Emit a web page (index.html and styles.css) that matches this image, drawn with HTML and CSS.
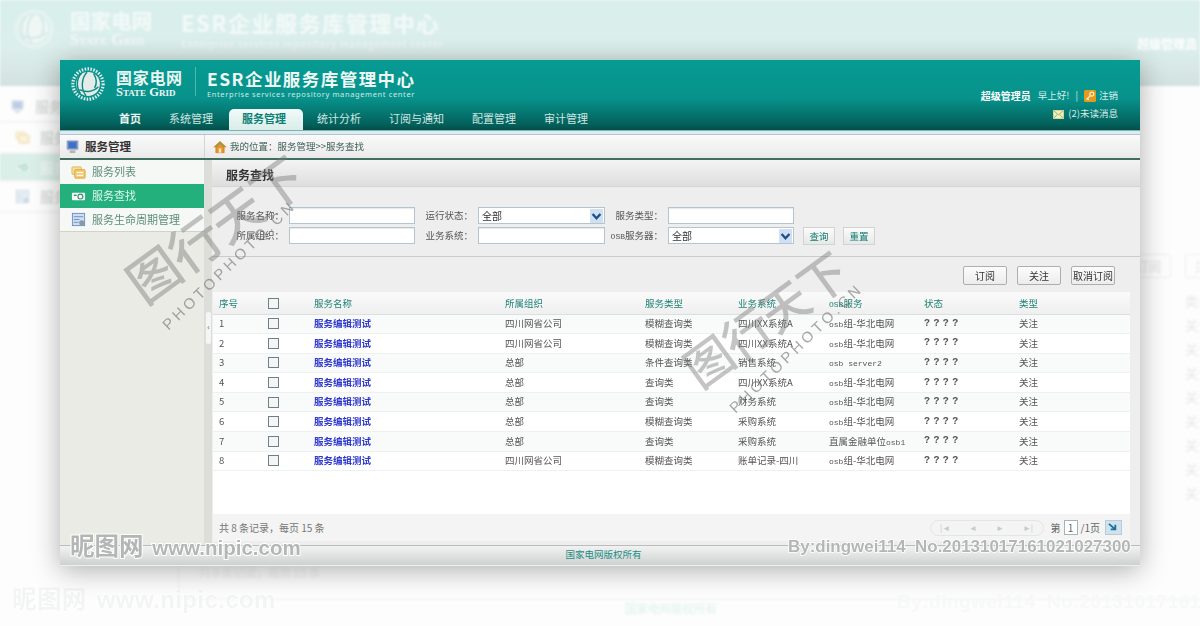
FILE: index.html
```html
<!DOCTYPE html>
<html lang="zh-CN">
<head>
<meta charset="utf-8">
<title>ESR企业服务库管理中心</title>
<link rel="stylesheet" href="styles.css">
</head>
<body>
<svg class="defs" width="0" height="0">
  <symbol id="logo" viewBox="0 0 36 36">
    <circle cx="18" cy="18" r="16" fill="none" stroke="var(--logo-fill, #e6efec)" stroke-width="3.4" stroke-dasharray="1.6 1.5"/>
    <circle cx="18" cy="18" r="12.6" fill="var(--logo-fill, #e4ebe9)"/>
    <path d="M11 7c-5 5-6 14-1 21M17 5.500c-6 6-7 18-1 25M9 24c6 3 14 3 20-3M24 7c3 5 4 10 1 15" fill="none" stroke="var(--logo-line, #0a8a80)" stroke-width="1.500"/>
  </symbol>
  <symbol id="monitor" viewBox="0 0 16 16">
    <rect x="2" y="1.500" width="12" height="10" rx="1" fill="#6f8fc4" stroke="#c3c9d6"/>
    <rect x="4" y="3.500" width="8" height="6" fill="#3f6fc9"/>
    <rect x="5" y="12" width="6" height="3" fill="#b5b5b5"/>
  </symbol>
  <symbol id="folder" viewBox="0 0 16 16">
    <rect x="1" y="2" width="10" height="8" rx="1" fill="#f6dd9a" stroke="#e0b65b"/>
    <rect x="4" y="5" width="11" height="9" rx="1" fill="#f4cd73" stroke="#d9a445"/>
    <path d="M6 8h7M6 11h7" stroke="#fff" stroke-width="1"/>
  </symbol>
  <symbol id="camera" viewBox="0 0 16 16">
    <rect x="1" y="4" width="14" height="8" rx="1" fill="#f4f8f6"/>
    <circle cx="10" cy="8" r="2.600" fill="none" stroke="#3a8e70" stroke-width="1.200"/>
    <rect x="3" y="6" width="3" height="1.500" fill="#3a8e70"/>
  </symbol>
  <symbol id="cycle" viewBox="0 0 16 16">
    <rect x="1.500" y="1.500" width="13" height="13" fill="#cfdff2" stroke="#6c8fbe"/>
    <path d="M3 5h10M3 8h6M3 11h5" stroke="#6c8fbe"/>
    <circle cx="11.500" cy="11.500" r="2.800" fill="#8a98a8"/>
  </symbol>
  <symbol id="home" viewBox="0 0 16 16">
    <path d="M8 1.500 1 8h2.200v6.500h9.600V8H15z" fill="#e98f2c" stroke="#c7701b" stroke-width=".6"/>
    <rect x="6.500" y="9.500" width="3" height="5" fill="#f7e5b8"/>
    <path d="M3.500 7.500 8 3.500l4.500 4" fill="none" stroke="#6aa84f" stroke-width="1.200"/>
  </symbol>
  <symbol id="key" viewBox="0 0 12 12">
    <rect width="12" height="12" rx="1.500" fill="#e39a1e"/>
    <circle cx="7.800" cy="4.200" r="2" fill="none" stroke="#fff3c9" stroke-width="1.200"/>
    <path d="M6.400 5.600 2.500 9.500M3.500 8.500l1.300 1.300" stroke="#fff3c9" stroke-width="1.200"/>
  </symbol>
  <symbol id="mail" viewBox="0 0 12 10">
    <rect x=".5" y=".5" width="11" height="9" fill="#f3f0b8" stroke="#d7dba0"/>
    <path d="M1 1l5 4.500L11 1M1 9l3.500-4M11 9 7.500 5" fill="none" stroke="#7fa36c" stroke-width=".9"/>
  </symbol>
  <symbol id="arrow" viewBox="0 0 10 10">
    <path d="M2 3.500 5 6.800 8 3.500" fill="none" stroke="#1f4e8c" stroke-width="1.800"/>
  </symbol>
</svg>

<div class="ghost">
  <div class="ghost-head">
    <svg class="ghost-logo"><use href="#logo"/></svg>
    <div class="ghost-brand">
      <div class="ghost-cn">国家电网</div>
      <div class="ghost-en">State Grid</div>
    </div>
    <div class="ghost-title">
      <div class="ghost-esr">ESR企业服务库管理中心</div>
      <div class="ghost-sub">Enterprise services repository management center</div>
    </div>
    <div class="ghost-user">超级管理员</div>
  </div>
  <div class="ghost-side">
    <div class="ghost-row ghost-first"><svg class="ghost-ico"><use href="#monitor"/></svg>服务</div>
    <div class="ghost-row"><svg class="ghost-ico"><use href="#folder"/></svg>服务</div>
    <div class="ghost-row ghost-on"><svg class="ghost-ico"><use href="#camera"/></svg>服务</div>
    <div class="ghost-row"><svg class="ghost-ico"><use href="#cycle"/></svg>服务</div>
  </div>
  <div class="ghost-btns"><span class="ghost-btn">订阅</span><span class="ghost-btn">关注</span></div>
  <div class="ghost-col">
    <span>类型</span><span>关注</span><span>关注</span><span>关注</span><span>关注</span><span>关注</span><span>关注</span><span>关注</span><span>关注</span>
  </div>
  <div class="ghost-foot"><span>共 8 条记录，每页 15 条</span></div>
  <div class="ghost-copy">国家电网版权所有</div>
</div>
<div class="ghost-nipic"><span class="nipic-cn">昵图网</span> www.nipic.com</div>
<div class="ghost-by">By:dingwei114&nbsp; No.20131017161021027300</div>

<main class="window">
  <header class="head">
    <div class="head-left">
      <div class="brand">
        <svg class="logo"><use href="#logo"/></svg>
        <div class="brand-name">
          <div class="brand-cn">国家电网</div>
          <div class="brand-en">State Grid</div>
        </div>
        <div class="brand-title">
          <div class="esr">ESR企业服务库管理中心</div>
          <div class="esr-sub">Enterprise services repository management center</div>
        </div>
      </div>
      <nav class="nav">
        <a class="nav-item nav-home">首页</a>
        <a class="nav-item">系统管理</a>
        <a class="nav-item nav-on">服务管理</a>
        <a class="nav-item">统计分析</a>
        <a class="nav-item">订阅与通知</a>
        <a class="nav-item">配置管理</a>
        <a class="nav-item">审计管理</a>
      </nav>
    </div>
    <div class="user">
      <div class="user-line">
        <b class="user-name">超级管理员</b><span>早上好!</span><span class="user-sep">|</span>
        <svg class="ico-12"><use href="#key"/></svg><span>注销</span>
      </div>
      <div class="user-line user-msg">
        <svg class="ico-mail"><use href="#mail"/></svg><span>(2)未读消息</span>
      </div>
    </div>
  </header>
  <div class="strip"></div>

  <div class="crumb-row">
    <div class="side-head"><svg class="ico-16"><use href="#monitor"/></svg><b>服务管理</b></div>
    <div class="crumb"><svg class="ico-14"><use href="#home"/></svg><span>我的位置：服务管理&gt;&gt;服务查找</span></div>
  </div>

  <div class="body-row">
    <aside class="side">
      <a class="side-item"><svg class="ico-16"><use href="#folder"/></svg>服务列表</a>
      <a class="side-item side-on"><svg class="ico-16"><use href="#camera"/></svg>服务查找</a>
      <a class="side-item side-last"><svg class="ico-16"><use href="#cycle"/></svg>服务生命周期管理</a>
    </aside>
    <div class="split"><span class="split-handle">‹</span></div>
    <section class="content">
      <h1 class="panel-title">服务查找</h1>
      <form class="filters">
        <label class="f-label">服务名称：</label><input class="f-input" type="text">
        <label class="f-label">运行状态：</label><div class="f-select"><span>全部</span><svg class="f-arrow"><use href="#arrow"/></svg></div>
        <label class="f-label">服务类型：</label><input class="f-input" type="text"><span></span>
        <label class="f-label">所属组织：</label><input class="f-input" type="text">
        <label class="f-label">业务系统：</label><input class="f-input" type="text">
        <label class="f-label"><span class="mono">OSB</span>服务器：</label><div class="f-select"><span>全部</span><svg class="f-arrow"><use href="#arrow"/></svg></div>
        <div class="f-btns"><span class="mini-btn">查询</span><span class="mini-btn">重置</span></div>
      </form>
      <div class="toolbar">
        <span class="tool-btn">订阅</span><span class="tool-btn">关注</span><span class="tool-btn">取消订阅</span>
      </div>
      <div class="grid-wrap">
        <table class="grid">
          <colgroup>
            <col class="c1"><col class="c2"><col class="c3"><col class="c4"><col class="c5"><col class="c6"><col class="c7"><col class="c8"><col class="c9">
          </colgroup>
          <thead>
            <tr><th>序号</th><th><span class="cb"></span></th><th>服务名称</th><th>所属组织</th><th>服务类型</th><th>业务系统</th><th><span class="mono">OSB</span>服务</th><th>状态</th><th>类型</th></tr>
          </thead>
          <tbody>
            <tr><td>1</td><td><span class="cb"></span></td><td class="link">服务编辑测试</td><td>四川网省公司</td><td>模糊查询类</td><td>四川XX系统A</td><td><span class="mono">osb</span>组-华北电网</td><td class="q">????</td><td>关注</td></tr>
            <tr><td>2</td><td><span class="cb"></span></td><td class="link">服务编辑测试</td><td>四川网省公司</td><td>模糊查询类</td><td>四川XX系统A</td><td><span class="mono">osb</span>组-华北电网</td><td class="q">????</td><td>关注</td></tr>
            <tr><td>3</td><td><span class="cb"></span></td><td class="link">服务编辑测试</td><td>总部</td><td>条件查询类</td><td>销售系统</td><td><span class="mono">osb server2</span></td><td class="q">????</td><td>关注</td></tr>
            <tr><td>4</td><td><span class="cb"></span></td><td class="link">服务编辑测试</td><td>总部</td><td>查询类</td><td>四川XX系统A</td><td><span class="mono">osb</span>组-华北电网</td><td class="q">????</td><td>关注</td></tr>
            <tr><td>5</td><td><span class="cb"></span></td><td class="link">服务编辑测试</td><td>总部</td><td>查询类</td><td>财务系统</td><td><span class="mono">osb</span>组-华北电网</td><td class="q">????</td><td>关注</td></tr>
            <tr><td>6</td><td><span class="cb"></span></td><td class="link">服务编辑测试</td><td>总部</td><td>模糊查询类</td><td>采购系统</td><td><span class="mono">osb</span>组-华北电网</td><td class="q">????</td><td>关注</td></tr>
            <tr><td>7</td><td><span class="cb"></span></td><td class="link">服务编辑测试</td><td>总部</td><td>查询类</td><td>采购系统</td><td>直属金融单位<span class="mono">osb1</span></td><td class="q">????</td><td>关注</td></tr>
            <tr><td>8</td><td><span class="cb"></span></td><td class="link">服务编辑测试</td><td>四川网省公司</td><td>模糊查询类</td><td>账单记录-四川</td><td><span class="mono">osb</span>组-华北电网</td><td class="q">????</td><td>关注</td></tr>
          </tbody>
        </table>
      </div>
      <div class="pager">
        <span class="pager-total">共 8 条记录，每页 15 条</span>
        <div class="pager-right">
          <div class="pager-pill"><span>|◄</span><span>◄</span><span>►</span><span>►|</span></div>
          <span>第</span><span class="pager-num">1</span><span>/1页</span>
          <span class="pager-go"><svg viewBox="0 0 14 12" class="pager-go-ico"><path d="M2 2l7 6M9 3v5H4" fill="none" stroke="#1c6f9c" stroke-width="2"/></svg></span>
        </div>
      </div>
    </section>
  </div>
  <footer class="foot">国家电网版权所有</footer>
</main>

<div class="wm wm-a">图行天下</div>
<div class="wm-url wm-url-a">PHOTOPHOTO.CN</div>
<div class="wm wm-b">图行天下</div>
<div class="wm-url wm-url-b">PHOTOPHOTO.CN</div>
<div class="nipic"><span class="nipic-cn">昵图网</span> www.nipic.com</div>
<div class="by">By:dingwei114&nbsp; No.20131017161021027300</div>
</body>
</html>
```
FILE: styles.css
```css
* { box-sizing: border-box; }
html, body { margin: 0; padding: 0; }
body {
  position: relative;
  width: 1200px;
  height: 626px;
  overflow: hidden;
  background: #fcfdfc;
  font: 9.5px/1.2 "Noto Sans CJK SC", "Liberation Sans", sans-serif;
  color: #4a4a4a;
}
.defs { position: absolute; }
h1 { margin: 0; }
a { color: inherit; text-decoration: none; }

/* blurred enlarged copy behind the window */
.ghost {
  position: absolute;
  inset: 0;
  filter: blur(1px);
  overflow: hidden;
}
.ghost-head {
  display: flex;
  align-items: flex-start;
  height: 86px;
  padding: 8px 0 0 14px;
  background: linear-gradient(#d8efec, #dcefec 55%, #d3e2e0);
  color: #f3faf8;
  font-weight: 700;
}
.ghost-logo { width: 40px; height: 42px; margin-right: 16px; --logo-fill: #eff7f5; --logo-line: #cfe6e2; }
.ghost-brand { width: 82px; margin-right: 29px; }
.ghost-cn { font-size: 20.5px; line-height: 25px; white-space: nowrap; }
.ghost-en { font: 700 16px/14px "Liberation Serif", serif; font-variant: small-caps; white-space: nowrap; }
.ghost-esr { font-size: 22px; line-height: 26px; letter-spacing: 1.55px; padding-top: 1px; white-space: nowrap; }
.ghost-sub { font-size: 9.5px; line-height: 12px; margin-top: 3px; letter-spacing: .82px; white-space: nowrap; font-weight: 400; }
.ghost-user { position: absolute; left: 1137px; top: 37px; font-size: 12px; color: #fff; white-space: nowrap; }
.ghost-side { position: absolute; left: 0; top: 92px; width: 60px; color: #dcdfdd; font-size: 14px; font-weight: 700; overflow: hidden; }
.ghost-row {
  display: flex; align-items: center; gap: 10px;
  height: 31px; padding-left: 15px;
  border-bottom: 2px solid #f3f5f4;
  white-space: nowrap;
}
.ghost-first { padding-left: 10px; }
.ghost-on { height: 28px; background: #d9efe7; color: #eef7f3; }
.ghost-ico { width: 15px; height: 15px; flex: none; opacity: .35; }
.ghost-btns { position: absolute; left: 1126px; top: 254px; display: flex; gap: 14px; color: #e4e6e5; font-size: 13px; }
.ghost-btn { width: 45px; height: 24px; line-height: 22px; border: 1px solid #eff1f0; border-radius: 2px; text-align: center; white-space: nowrap; }
.ghost-col { position: absolute; left: 1185px; top: 293px; display: flex; flex-direction: column; gap: 8px; font-size: 13px; color: #e6e8e7; white-space: nowrap; }
.ghost-col span { height: 16px; line-height: 16px; }
.ghost-foot { position: absolute; left: 178px; top: 540px; width: 1022px; height: 60px; padding: 26px 0 0 20px; border-left: 1px solid #f1f3f2; border-bottom: 1px solid #f1f3f2; color: #f0f1f1; font-size: 11.5px; }
.ghost-copy { position: absolute; left: 625px; top: 602px; font-size: 11.5px; color: #dff1ef; }
.ghost-nipic { position: absolute; left: 12px; top: 582px; font: 700 24px/34px "Liberation Sans", sans-serif; color: #f3f5f4; -webkit-text-stroke: 1.5px #fff; paint-order: stroke fill; letter-spacing: .4px; white-space: nowrap; }
.ghost-by { position: absolute; left: 897px; top: 590px; font: 700 19px/24px "Liberation Sans", sans-serif; color: #f7f8f8; white-space: nowrap; letter-spacing: .5px; }

/* main window */
.window {
  position: absolute;
  left: 60px; top: 60px;
  display: flex; flex-direction: column;
  width: 1080px; height: 506px;
  background: #eeeeee;
  box-shadow: 0 4px 26px rgba(0, 0, 0, .32);
  filter: blur(.3px);
}
.head {
  display: flex; justify-content: space-between;
  height: 70px;
  background: linear-gradient(#069b93, #07928b 55%, #03605a 92%, #034f4a);
  color: #fff;
}
.head-left { display: flex; flex-direction: column; }
.brand { display: flex; height: 49px; padding: 7px 0 0 10px; }
.logo { width: 36px; height: 34px; margin-right: 10px; flex: none; }
.brand-name { width: 67px; padding-top: 1px; }
.brand-cn { font-size: 16px; line-height: 18px; font-weight: 700; white-space: nowrap; color: #e9f6f3; letter-spacing: .7px; }
.brand-en { font: 700 12.5px/11px "Liberation Serif", serif; font-variant: small-caps; white-space: nowrap; color: #eef7f5; margin-top: 1px; }
.brand-title { margin-left: 12px; padding-left: 11px; border-left: 1px solid rgba(255, 255, 255, .3); height: 29px; }
.esr { font-size: 17.5px; line-height: 21px; font-weight: 700; white-space: nowrap; letter-spacing: 1.45px; color: #eef8f6; padding-top: 1px; }
.esr-sub { font: 7.5px/9px "Noto Sans", sans-serif; white-space: nowrap; letter-spacing: .62px; color: #cfe9e5; padding-top: 1px; }
.nav { display: flex; align-items: flex-end; flex: 1; padding-left: 59px; font-size: 11px; gap: 28px; color: #cfe6e2; }
.nav-item { display: block; line-height: 18px; padding-bottom: 3px; white-space: nowrap; }
.nav-home { font-weight: 700; color: #eaf5f2; }
.nav-on {
  width: 74px; height: 21px; margin: 0 -14px 0 -12px; padding: 0 4px 0 0;
  text-align: center; line-height: 18px;
  background: linear-gradient(#f1fbf8, #d9ece9);
  border-radius: 5px 5px 0 0;
  color: #0b7f75; font-weight: 700;
}
.user { padding: 27px 22px 0 0; font-size: 9.5px; color: #d6ece8; }
.user-line { display: flex; align-items: center; justify-content: flex-end; height: 18px; gap: 6px; }
.user-name { color: #fff; font-size: 10px; margin-right: 1px; }
.user-msg { gap: 4px; }
.ico-12 { width: 12px; height: 12px; margin-right: -3px; }
.ico-mail { width: 11px; height: 9px; }
.ico-14 { width: 14px; height: 14px; flex: none; }
.ico-16 { width: 15px; height: 15px; flex: none; }
.strip { height: 5px; background: #d9ecf1; border-top: 1px solid #7fb2ad; border-bottom: 1px solid #b9c5cb; }

.crumb-row { display: flex; height: 25px; background: linear-gradient(#fafafa, #eaeaea); border-bottom: 2px solid #3f6d60; }
.side-head {
  display: flex; align-items: center; gap: 5px;
  width: 145px; padding-left: 5px;
  font-size: 11.5px; color: #333;
  border-right: 1px solid #d4d4d4;
}
.crumb { display: flex; align-items: center; gap: 3px; padding-left: 8px; color: #41615a; }

.body-row { display: flex; height: 385px; }
.side { width: 144px; background: #e9ebe4; flex: none; }
.side-item {
  display: flex; align-items: center; gap: 6px;
  height: 24px; padding-left: 11px;
  font-size: 11px; color: #5c8d7b;
  background: #f6f8f6;
}
.side-on { background: #23b07c; color: #e4f6ee; }
.side-last { border-bottom: 1px solid #d0d3cc; white-space: nowrap; }
.split { position: relative; width: 8px; flex: none; background: #dcdeda; }
.split-handle {
  position: absolute; left: 2px; top: 152px;
  width: 5px; height: 32px;
  background: #f5f5f5; border-radius: 2px;
  line-height: 30px; font-size: 8px; text-align: center; color: #444;
}
.content { flex: 1; display: flex; flex-direction: column; min-width: 0; }
.panel-title {
  height: 27px; padding: 7px 0 0 14px;
  font-size: 12px; line-height: 15px; font-weight: 700; color: #333;
  background: linear-gradient(#f4f4f4, #dedede);
  border-bottom: 1px solid #d4d4d4;
}
.filters {
  display: grid;
  grid-template-columns: 77px 126px 63px 127px 63px 126px auto;
  grid-auto-rows: 17px;
  row-gap: 3px;
  height: 70px; padding-top: 20px;
  border-bottom: 1px solid #c9cccb;
}
.f-label { text-align: right; padding-right: 5px; line-height: 16px; white-space: nowrap; color: #555; }
.f-input {
  height: 17px; width: 100%; margin: 0; padding: 0 2px;
  background: #fff;
  border: 1px solid #b5c4cd;
  box-shadow: inset 0 1px 1px #e6eaec;
  font: inherit;
}
.f-select {
  display: flex; align-items: center; justify-content: space-between;
  height: 17px; padding: 0 1px 0 3px;
  background: #fff; border: 1px solid #b5c4cd;
  color: #333; font-size: 10px;
}
.f-arrow { width: 13px; height: 14px; background: #cfe0f3; }
.f-btns { display: flex; gap: 8px; padding-left: 9px; }
.mini-btn {
  width: 32px; height: 18px; line-height: 16px; text-align: center;
  border: 1px solid #cfd3d1; background: linear-gradient(#fbfbfb, #e6e8e7);
  color: #0d7a70; font-size: 9.5px;
}
.toolbar { display: flex; justify-content: flex-end; gap: 10px; height: 35px; padding: 9px 25px 0 0; }
.tool-btn {
  width: 44px; height: 19px; line-height: 17px; text-align: center;
  font-size: 10px; color: #333; white-space: nowrap;
  background: linear-gradient(#fcfcfc, #ececec);
  border: 1px solid #aab0ae; border-radius: 2px;
}
.grid-wrap { height: 222px; margin: 0 10px 0 1px; background: #fff; }
.grid { width: 917px; border-collapse: collapse; table-layout: fixed; }
.c1 { width: 49px; } .c2 { width: 46px; } .c3 { width: 191px; } .c4 { width: 140px; } .c5 { width: 93px; }
.c6 { width: 91px; } .c7 { width: 95px; } .c8 { width: 95px; } .c9 { width: 117px; }
.grid th {
  height: 22px; padding: 1px 0 0 6px;
  text-align: left; font-weight: 400; color: #1f8277;
  background: linear-gradient(#fafafa, #efefef);
  border-bottom: 1px solid #dcdfe0;
  white-space: nowrap;
}
.grid td {
  height: 19.6px; padding: 0 0 0 6px;
  border-bottom: 1px solid #eef1f2;
  color: #555; white-space: nowrap; overflow: hidden;
}
.grid tbody tr:nth-child(odd) td { background: #f9fbfb; }
.grid tbody tr:last-child td { background: #fff; }
.cb { display: block; width: 11px; height: 11px; background: #f4f6f6; border: 1px solid #6e7f88; }
.link { color: #2f38cc !important; font-weight: 700; }
.q { font: 700 10px/1 "Liberation Mono", monospace; letter-spacing: 3.4px; }
.mono { font: 8px/1 "Liberation Mono", monospace; }
.pager {
  display: flex; align-items: center; justify-content: space-between;
  height: 27px; margin: 0 10px 0 1px; padding: 0 8px 0 6px;
  background: #f3f4f3; color: #777; font-size: 10px;
}
.pager-right { display: flex; align-items: center; gap: 3px; color: #666; }
.pager-pill {
  display: flex; align-items: center; justify-content: space-around;
  width: 114px; height: 16px; margin-right: 4px;
  border: 1px solid #e3e6e6; border-radius: 8px;
  color: #c4cbcc; font-size: 8px;
}
.pager-num { width: 14px; height: 15px; line-height: 13px; text-align: center; background: #fff; border: 1px solid #a8b1b3; }
.pager-go { display: flex; align-items: center; justify-content: center; width: 17px; height: 15px; margin-left: 2px; background: #cfe3ee; border: 1px solid #b9cbd5; }
.pager-go-ico { width: 13px; height: 11px; }
.foot {
  flex: 1;
  padding-left: 7px;
  text-align: center; font-size: 9.5px; line-height: 17px; color: #1b8d84;
  background: linear-gradient(#f2f2f2, #cfd1d1);
  border-top: 1px solid #b9bcbc;
  border-bottom: 1px solid #e9f1f3;
}

/* watermarks over everything */
.wm {
  position: absolute;
  font-size: 52px; line-height: 60px; font-weight: 500;
  letter-spacing: -1px;
  color: rgba(125, 125, 125, .45);
  white-space: nowrap;
  transform: rotate(-36deg);
}
.wm-a { left: 112px; top: 198px; }
.wm-b { left: 670px; top: 288px; font-size: 48px; }
.wm-url {
  position: absolute;
  font: 400 15px/18px "Liberation Sans", sans-serif;
  letter-spacing: 3.6px;
  color: rgba(110, 110, 110, .6);
  white-space: nowrap;
  transform: rotate(-44deg);
}
.wm-url-a { left: 140px; top: 256px; }
.wm-url-b { left: 707px; top: 339px; }
.nipic {
  position: absolute; left: 70px; top: 529px;
  font: 700 20.5px/32px "Liberation Sans", sans-serif;
  color: #b4b6b6;
  -webkit-text-stroke: 2px #fff;
  paint-order: stroke fill;
  white-space: nowrap;
}
.nipic-cn { font: 700 24.5px/32px "Noto Sans CJK SC", sans-serif; margin-right: 3px; }
.by {
  position: absolute; left: 788px; top: 537px;
  font: 700 16.95px/20px "Liberation Sans", sans-serif;
  color: #b4b6b6;
  -webkit-text-stroke: 1.6px #fff;
  paint-order: stroke fill;
  white-space: nowrap;
}
```
